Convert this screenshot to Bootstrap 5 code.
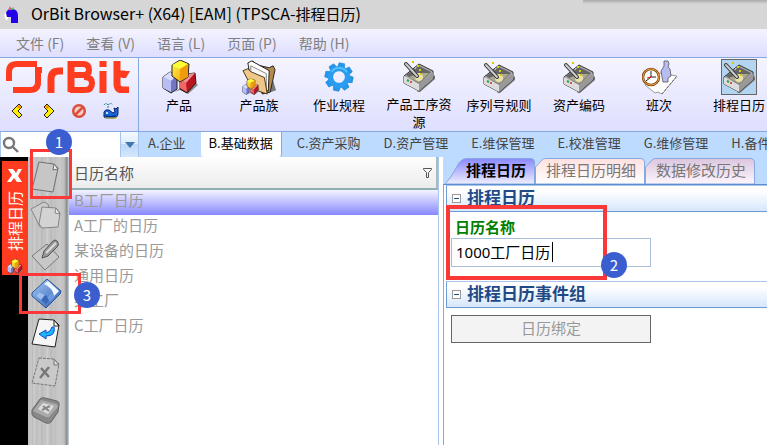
<!DOCTYPE html>
<html lang="zh-CN">
<head>
<meta charset="utf-8">
<meta name="viewport" content="width=device-width, initial-scale=1">
<title>OrBit Browser+</title>
<link href="https://cdn.jsdelivr.net/npm/bootstrap@5.3.0/dist/css/bootstrap.min.css" rel="stylesheet">
<style>
body{font-family:"Noto Sans CJK SC","Noto Sans",sans-serif;font-size:15px;line-height:20px;color:#000;background:#fff}
button{font:inherit;border:0;background:none;padding:0;color:inherit}
svg{display:block;flex:none}
.titlebar{height:29px;background:#d6d6d6;padding-left:3px;gap:11px;position:relative}
.titlebar h1{font-size:16px;line-height:26px;padding-bottom:3px;font-weight:400}
.titlebar h1 span{font-size:15px}
.top-shade{position:absolute;top:0;right:0;width:24%;height:4px;background:linear-gradient(#aaa,#d6d6d6)}
.menubar{height:28px;background:linear-gradient(#f3f3ff,#dedeff);padding-left:16px;gap:22px;font-size:14px}
.menubar a{color:#808080;text-decoration:none}
.ribbon{height:74px;border-top:1px solid #86a9e0;background:linear-gradient(#f5f5ff,#dedeff)}
.brand-box{width:139px;border-right:1px solid #86a9e0;padding:3px 6px 0}
.brand-tools{padding:9px 5px 0;gap:16px}
.tool{width:80px;padding:1px 4px 0;font-size:13px;line-height:18px;display:flex;flex-direction:column;align-items:center}
.tool .pic{width:36px;height:36px;display:grid;place-items:center;margin-bottom:1px;border:1px solid transparent}
.tool .pic.on{background:#b3d5f2;border-color:#666}
.tabbar{height:26px;background:#bddbff;border-top:1px solid #86a9e0;font-size:13px}
.search-box{width:139px;border:solid #a8c4ea;border-width:0 1px;background:#fff}
.search-box input{min-width:0;width:90px;border:0;outline:0;background:transparent}
.search-box .drop{width:18px;height:25px;border-left:1px solid #a8c4ea;background:linear-gradient(#f5faff,#dceafb 50%,#bdd8f8 50%,#d5e7fc)}
.module-tabs{gap:7px;padding-left:1px}
.module-tabs button{padding:0 8px 3px;height:25px;color:#444;line-height:20px;white-space:nowrap;flex:none}
.module-tabs button.on{background:#fff;color:#000;border-radius:0 0 3px 3px;border-right:1px solid #86a9e0}
.workspace{min-height:0}
.left-part{flex:443 1 0;min-width:0}
.right-part{flex:324 1 0;min-width:0;background:#fff;position:relative}
.dock{width:28px;background:#000;padding:4px 0 0 2px}
.dock-tab{background:#ff3c1f;color:#fff;height:114px;width:26px;padding:7px 0 1px}
.dock-text{writing-mode:vertical-rl;text-orientation:sideways;transform:rotate(180deg);line-height:20px}
.actions{width:41px;border-right:1px solid #b8c8d4;position:relative;background:
 linear-gradient(90deg,transparent 36px,#858585 39px,#bbb 40px),
 repeating-linear-gradient(90deg,transparent 0 5px,#d6d6d6 6px,transparent 7px 13px),
 repeating-linear-gradient(90deg,#bfbfbf 0,#c8c8c8 3px,#b8b8b8 5px,#c5c5c5 7px,#bfbfbf 9px)}
.actions button{height:39px;width:36px;display:grid;place-items:center}
.list-area{border-right:1px solid #a8c4ea;min-width:0}
.list-table{width:100%;border-collapse:separate;border-spacing:0}
.list-table th{height:33px;font-weight:400;color:#555;padding:0 4px 0 5px;background:linear-gradient(#fefefe,#ececec);border-right:2px solid #a9bcbc;border-bottom:2px solid #8fb0b0}
.list-table td{height:25px;padding:0 5px 2px;color:#9a9a9a;line-height:20px;vertical-align:top}
.list-table tr.on td{background:linear-gradient(#f4f4ff,#8888ff)}
.gap-strip{width:4px;background:#fff}
.form-tabs{background:#bddbff;height:28px;border-bottom:1px solid #5c8fcf;flex:none}
.form-tabs button{height:26px;line-height:24px;padding-bottom:2px;color:#777;position:relative;flex:none;text-align:left;padding-left:11px}
.form-tabs svg{position:absolute;inset:0}
.form-tabs span{position:relative}
.form-tabs .t1{width:84px;padding-left:15px;font-weight:700;color:#000}
.form-tabs .t2,.form-tabs .t3{width:110px}
.form-body{border-left:1px solid #86a9e0;padding-left:2px}
.sect{height:27px;border:1px solid #6f9bd6;border-right:0;border-top-color:#a9c5ec;background:linear-gradient(#fff 20%,#d5e7fc);gap:6px;padding-left:5px}
.sect h2{font-size:17px;line-height:20px;padding-bottom:4px;font-weight:700;color:#1f4a86}
.fold{width:9px;height:9px;border:1px solid #999;position:relative;background:#fff}
.fold::after{content:"";position:absolute;left:1px;right:1px;top:3px;height:1px;background:#1f4a86}
.field-group{padding:4px 5px 14px}
.field-group label{font-weight:700;color:#008000;padding-left:4px;line-height:22px;display:block}
.field-wrap{width:200px;max-width:100%;height:29px;border:1px solid #a9bedb;background:#fff;padding:0 0 2px 4px}
.field-wrap input{font-family:"Noto Sans","Noto Sans CJK SC",sans-serif;width:97px;border:0;outline:0;padding:0;background:none;border-right:1px solid #000;line-height:20px;height:20px}
.bind{width:200px;height:28px;border:1px solid #666;background:#f3f3f3;color:#999;margin:7px 5px;padding-bottom:2px;line-height:24px}
.mark-box{position:absolute;border:3px solid #fb3838;pointer-events:none;z-index:3}
.mark-num{position:absolute;width:26px;height:26px;border-radius:50%;background:#3a5ed0;color:#fff;line-height:25px;text-align:center;z-index:4}
.box-a{left:2px;top:-8px;width:42px;height:50px}.num-a{left:18px;top:-28px}
.box-c{left:-9px;top:116px;width:62px;height:41px}.num-c{left:46px;top:125px}
.box-b{left:3px;top:48px;width:161px;height:75px;border-width:4px}.num-b{left:158px;top:95px}
</style>
<script src="https://cdn.jsdelivr.net/npm/bootstrap@5.3.0/dist/js/bootstrap.bundle.min.js"></script>
</head>
<body>
<svg width="0" height="0" class="position-absolute" aria-hidden="true">
<defs>
<linearGradient id="gy" x2="1" y2="1"><stop stop-color="#ffff50"/><stop offset="1" stop-color="#f09000"/></linearGradient>
<linearGradient id="gf" x2="1" y2="1"><stop stop-color="#a8ccf8"/><stop offset="1" stop-color="#2a59b0"/></linearGradient>
<linearGradient id="gt1" x2="0" y2="1"><stop stop-color="#8888ff"/><stop offset="1" stop-color="#eeeeff"/></linearGradient>
<linearGradient id="gt2" x2="0" y2="1"><stop stop-color="#ffe0e0"/><stop offset="1" stop-color="#fff"/></linearGradient>
<linearGradient id="gt3" x2="0" y2="1"><stop stop-color="#dcc6de"/><stop offset="1" stop-color="#fdf6fd"/></linearGradient>
<symbol id="cubes" viewBox="0 0 36 34"><path d="M12 32l6-2 8 4 10-9-5-5z" fill="#888"/><path d="M1 17l7-5 7 3v14l-6 4-8-5z" fill="#7177c0" stroke="#222"/><path d="M1 17l8 4v11l-8-4z" fill="#b8bef5"/><path d="M1 17l7-5 7 3-6 6z" fill="#d8dcff"/><path d="M18 19l6-5 9-1 1 10-9 10-7-4z" fill="#b91520" stroke="#222"/><path d="M18 19l6 4 1 9-7-4z" fill="#ee6868"/><path d="M18 19l6-5 9-1-9 10z" fill="#f49090"/><path d="M10 5l8-5 9 4-1 13-8 5-8-6z" fill="url(#gy)" stroke="#222"/><path d="M10 5l8-4 8 3-8 5z" fill="#ffff38"/><path d="M18 9l8-5v13l-8 4z" fill="#ef9b0c"/></symbol>
<symbol id="folder" viewBox="0 0 36 36"><path d="M27 34l8-3-3-10z" fill="#777"/><path d="M7 9l1-5 3-3 4 4 13 3 4-2 2 4-5 23-8 2z" fill="#b5894c" stroke="#222"/><path d="M6 3l4-2 18 10-1 21-17-7z" fill="#fff" stroke="#222"/><path d="M9 6l16 8v16L9 22z" fill="#f8f8f8" stroke="#555" stroke-width=".7"/><path d="M1 11l5-2 3 3 14 6 3 17-15-5z" fill="#efc788" stroke="#4b351b"/><use href="#cubes" x="0" y="19" width="18" height="17"/></symbol>
<symbol id="gear" viewBox="0 0 32 32"><g transform="translate(16 16) rotate(12)"><g fill="#2497ea" stroke="#1478cc" stroke-width=".5"><g id="cog"><path d="M-3-15h6l1 6h-8zM-3 15h6l1-6h-8zM-15-3v6l6 1v-8zM15-3v6l-6 1v-8z"/></g><use href="#cog" transform="rotate(45)"/></g><circle r="9" fill="none" stroke="#2b9df0" stroke-width="5.5"/><path d="M-9-4a10 10 0 0 1 16-3" fill="none" stroke="#55c2fb" stroke-width="2"/></g></symbol>
<symbol id="box" viewBox="0 0 33 31"><path d="M14 31l18-17v4L17 31z" fill="#777"/><path d="M1 15L16 3l14 7v8L16 30 1 22z" fill="#aaa" stroke="#333"/><path d="M3 14L16 5l12 6-12 12z" fill="#666"/><path d="M6 16l10-4 10 0-10 10z" fill="#aba88c"/><path d="M1 15l15 8v7L1 22z" fill="#dcdcdc"/><path d="M16 23l14-12v7L16 30z" fill="#999"/><circle cx="16" cy="16" r="4" fill="#f3edab" opacity=".85"/><path d="M3 3l11 12" stroke="#333" stroke-width="4" stroke-linecap="round"/><path d="M3 3l11 12" stroke="#ccc" stroke-width="2" stroke-linecap="round"/><path d="M9 1h2M14 5h2M16 9h2M12 7h1M17 13h2" stroke="#d8cc00" stroke-width="2"/><path d="M4 19l2 1" stroke="#27a33f" stroke-width="2"/><path d="M7 21h2" stroke="#d32828" stroke-width="1.500"/></symbol>
<symbol id="shift" viewBox="0 0 36 35"><path d="M3 25l15-12 17 3-15 18-4-2-3 1z" fill="#fff" stroke="#999"/><path d="M20 34l15-18" stroke="#555" stroke-dasharray="2 2"/><circle cx="9" cy="17" r="8" fill="#fff" stroke="#80470c" stroke-width="2.500"/><circle cx="9" cy="17" r="8" fill="none" stroke="#f0a040"/><path d="M9 11v6h5M9 17l-5 4" stroke="#222" fill="none"/><path d="M5 18l4-1" stroke="red"/><path d="M22 1h4l1 3-1 3 2 2 1 7-3 2v4h-5l-1-5-1-6 2-3 1-2z" fill="#b9bcf0" stroke="#555" stroke-width=".8"/></symbol>
<symbol id="page" viewBox="0 0 30 32"><path d="M8 1l15 2 4 4-5 24L1 28z" fill="#c6c6c6" stroke="#707070"/><path d="M23 3l-1 6 5-1z" fill="#eee" stroke="#707070"/></symbol>
</defs></svg>
<div class="d-flex flex-column vh-100 overflow-hidden">
<header class="titlebar d-flex align-items-center flex-shrink-0">
<svg width="17" height="19" viewBox="0 0 17 19"><path d="M1 10l3-4 2 5-2 4H3z" fill="#fff"/><path d="M3 8q1-4 6-4 6 0 6 7v7H8v-6H4z" fill="#2200e8"/><path d="M5 5l2-4 2 4z" fill="#e45a9c"/><path d="M7 4l4-2-1 3z" fill="#47c35a"/></svg>
<h1 class="m-0 text-nowrap">OrBit Browser+ (X64) [EAM] (TPSCA-<span>排程日历</span>)</h1><div class="top-shade"></div>
</header>
<nav class="menubar d-flex align-items-center flex-shrink-0"><a href="#">文件 (F)</a><a href="#">查看 (V)</a><a href="#">语言 (L)</a><a href="#">页面 (P)</a><a href="#">帮助 (H)</a></nav>
<div class="ribbon d-flex flex-shrink-0 overflow-hidden">
<div class="brand-box flex-shrink-0">
<svg width="124" height="32" viewBox="0 0 124 32" fill="none" stroke="#ff3c1f" stroke-width="6" role="img" aria-label="OrBit"><path d="M3 20V11q0-8 8-8h20M7 29h17q8 0 8-8V9h4"/><path d="M45 32V18q0-8 8-8h4" stroke-width="7"/><path d="M65 31V0" stroke-width="7"/><path d="M64 3h13q6 0 6 6 0 5-6 5H64M78 16q8 0 8 6 0 7-7 7H64"/><path d="M97 10v22" stroke-width="7"/><path d="M97 0v6" stroke-width="7"/><path d="M111 0v23q0 6 6 6h6M110 13h9" stroke-width="7"/><path d="M117 10h7l-4 7h-4z" fill="#ff3c1f" stroke="none"/></svg>
<div class="brand-tools d-flex align-items-center">
<button aria-label="后退"><svg width="12" height="16" viewBox="0 0 12 16"><path d="M8 1L1 8l7 7 3-3-4-4 4-4z" fill="#ffee00" stroke="#222"/><path d="M8 2L6 4l3 2 1-2z" fill="#f80"/></svg></button>
<button aria-label="前进" class="ms-1"><svg width="12" height="16" viewBox="0 0 12 16"><path d="M4 1l7 7-7 7-3-3 4-4-4-4z" fill="#ffee00" stroke="#222"/><path d="M4 2L2 4l3 2 1-2z" fill="#f80"/></svg></button>
<button aria-label="停止"><svg width="16" height="16" viewBox="0 0 16 16" fill="none" stroke="#d94f3d" stroke-width="2.500"><circle cx="8" cy="8" r="5.800" fill="#f8cdc5"/><path d="M4 12l8-8"/></svg></button>
<button aria-label="浏览"><svg width="17" height="17" viewBox="0 0 17 17"><path d="M5 6V3Q3 0 1 3M5 3q3-3 5 0" fill="none" stroke="#178c99" stroke-dasharray="2 1"/><path d="M1 15V10q1-3 5-2l4 3 2-1-1-4 2 1 2-2v6q0 5-5 5H3z" fill="#1767d8" stroke="#0b2469"/><path d="M2 13q5 2 11 0l-1 2H3z" fill="#092a80"/><path d="M2 16h12" stroke="#d8c830"/><circle cx="4" cy="11" r="1" fill="#fff"/></svg></button>
</div></div>
<div class="d-flex flex-nowrap">
<button class="tool"><span class="pic"><svg width="36" height="34"><use href="#cubes"/></svg></span>产品</button>
<button class="tool"><span class="pic"><svg width="35" height="35"><use href="#folder"/></svg></span>产品族</button>
<button class="tool"><span class="pic"><svg width="30" height="30"><use href="#gear"/></svg></span>作业规程</button>
<button class="tool"><span class="pic"><svg width="33" height="31"><use href="#box"/></svg></span>产品工序资源</button>
<button class="tool"><span class="pic"><svg width="33" height="31"><use href="#box"/></svg></span>序列号规则</button>
<button class="tool"><span class="pic"><svg width="33" height="31"><use href="#box"/></svg></span>资产编码</button>
<button class="tool"><span class="pic"><svg width="36" height="35"><use href="#shift"/></svg></span>班次</button>
<button class="tool"><span class="pic on"><svg width="33" height="31"><use href="#box"/></svg></span>排程日历</button>
</div></div>
<div class="tabbar d-flex flex-shrink-0 overflow-hidden">
<div class="search-box d-flex align-items-center justify-content-between flex-shrink-0"><svg width="19" height="19" viewBox="0 0 19 19" fill="none" stroke="#777" stroke-width="2.400"><circle cx="8" cy="8" r="5"/><path d="M12 12l5 5"/></svg><input type="text" aria-label="搜索"><button class="drop d-grid" aria-label="选项"><svg class="m-auto" width="10" height="6"><path d="M0 0h10L5 6z" fill="#4176ad"/></svg></button></div>
<div class="module-tabs d-flex"><button>A.企业</button><button class="on">B.基础数据</button><button>C.资产采购</button><button>D.资产管理</button><button>E.维保管理</button><button>E.校准管理</button><button>G.维修管理</button><button>H.备件</button></div>
</div>
<main class="workspace d-flex flex-grow-1">
<section class="left-part d-flex">
<div class="dock flex-shrink-0"><div class="dock-tab d-flex flex-column align-items-center justify-content-between"><button aria-label="关闭"><svg width="16" height="16" viewBox="0 0 16 16"><path d="M1 1h5l3 4 2-4h4l-4 7 4 6h-5l-3-4-3 4H0l5-7z" fill="#fff"/></svg></button><span class="dock-text">排程日历</span><svg width="16" height="15"><use href="#cubes"/></svg></div></div>
<div class="actions flex-shrink-0">
<button aria-label="新建"><svg width="30" height="32"><use href="#page"/></svg></button>
<button aria-label="复制"><svg width="32" height="30" viewBox="0 0 32 30"><path d="M1 8L14 1l4 2 4 18-12 5z" fill="#ccc" stroke="#858585"/><path d="M12 6l14 1 4 5-2 14-16 1-3-4z" fill="#d3d3d3" stroke="#858585"/><path d="M26 7l-1 5 5 1z" fill="#eee" stroke="#858585"/></svg></button>
<button aria-label="编辑"><svg width="30" height="32" viewBox="0 0 30 32"><path d="M1 17L16 5l12 13-14 13z" fill="#c8c8c8" stroke="#777"/><path d="M11 19l2-7L22 2q2-2 4 0t1 5L17 17z" fill="#999" stroke="#555"/><path d="M15 14L25 4" stroke="#ddd" stroke-width="2"/></svg></button>
<button aria-label="保存"><svg width="31" height="31" viewBox="0 0 31 31"><path d="M1 15L16 1l14 12-1 3-14 14L1 18z" fill="url(#gf)" stroke="#2c5597"/><path d="M13 6l4-3 11 10-5 5q-1-8-10-12z" fill="#eff7ff"/><path d="M8 14l12 6-5 6-10-8z" fill="#3a66b4"/><path d="M8 14l6 3-4 5-5-4z" fill="#9ac0f0"/><path d="M16 19l5-4 3 4-5 5z" fill="#6c99df"/></svg></button>
<button aria-label="撤销"><svg width="30" height="32" viewBox="0 0 30 32"><path d="M8 2l15 1 5 5-4 22L1 27z" fill="#f6f6f6" stroke="#222"/><path d="M23 3v6h5z" fill="#fff" stroke="#222"/><path d="M21 10h2q2 9-8 9v3l-7-5 7-4v3q5-1 6-6z" fill="#16b9f5" stroke="#1248d5"/></svg></button>
<button aria-label="删除"><svg width="30" height="32" viewBox="0 0 30 32"><path d="M8 2l15 1 5 5-4 22L1 27z" fill="#c9c9c9" stroke="#777" stroke-dasharray="3 1"/><path d="M23 3v6h5z" fill="#ddd" stroke="#777"/><path d="M10 12l8 9M18 11l-9 11" stroke="#777" stroke-width="2.400"/></svg></button>
<button aria-label="关闭"><svg width="30" height="27" viewBox="0 0 30 27"><path d="M1 13L9 2q2-2 5-1l12 3q3 1 2 4l-1 7-7 10q-2 2-5 1L3 20q-3-2-2-7z" fill="#888" stroke="#666"/><path d="M2 14L10 3l15 4q3 1 1 4l-7 8q-1 2-4 1z" fill="#aaa"/><path d="M7 12l5-6 11 3-6 8z" fill="#ddd"/><path d="M12 9l6 5M19 9l-8 4" stroke="#888" stroke-width="2"/></svg></button>
<div class="mark-box box-a"></div><div class="mark-num num-a">1</div><div class="mark-box box-c"></div><div class="mark-num num-c">3</div>
</div>
<div class="list-area flex-grow-1"><table class="list-table"><thead><tr><th scope="col"><div class="d-flex align-items-center justify-content-between">日历名称<svg width="9" height="10" viewBox="0 0 9 10"><path d="M.5.5h8v1l-3 3v5h-2v-5l-3-3z" fill="none" stroke="#555"/></svg></div></th></tr></thead>
<tbody><tr class="on"><td>B工厂日历</td></tr><tr><td>A工厂的日历</td></tr><tr><td>某设备的日历</td></tr><tr><td>通用日历</td></tr><tr><td>某工厂</td></tr><tr><td>C工厂日历</td></tr></tbody></table></div>
<div class="gap-strip"></div>
</section>
<section class="right-part d-flex flex-column">
<div class="form-tabs d-flex align-items-end overflow-hidden">
<button class="t1 ms-2"><svg width="84" height="26" class="overflow-visible"><path d="M-6 26Q0 20 5 10Q9 1 15 .5H80Q83.500 1 83.500 4V26z" fill="url(#gt1)" stroke="#86a9e0"/></svg><span>排程日历</span></button>
<button class="t2"><svg width="110" height="26"><path d="M.5 26V9L7 2Q8 .5 11 .5H106Q109.500 1 109.500 4V26z" fill="url(#gt2)" stroke="#86a9e0"/></svg><span>排程日历明细</span></button>
<button class="t3"><svg width="110" height="26"><path d="M.5 26V9L7 2Q8 .5 11 .5H106Q109.500 1 109.500 4V26z" fill="url(#gt3)" stroke="#86a9e0"/></svg><span>数据修改历史</span></button>
</div>
<div class="form-body flex-grow-1">
<div class="sect d-flex align-items-center"><button class="fold" aria-label="折叠"></button><h2 class="m-0">排程日历</h2></div>
<div class="field-group"><label for="calname">日历名称</label><div class="field-wrap d-flex align-items-center"><input id="calname" type="text" value="1000工厂日历"></div></div>
<div class="sect d-flex align-items-center"><button class="fold" aria-label="折叠"></button><h2 class="m-0">排程日历事件组</h2></div>
<button class="bind d-block" disabled>日历绑定</button>
</div>
<div class="mark-box box-b"></div><div class="mark-num num-b">2</div>
</section>
</main>
</div>
</body>
</html>
